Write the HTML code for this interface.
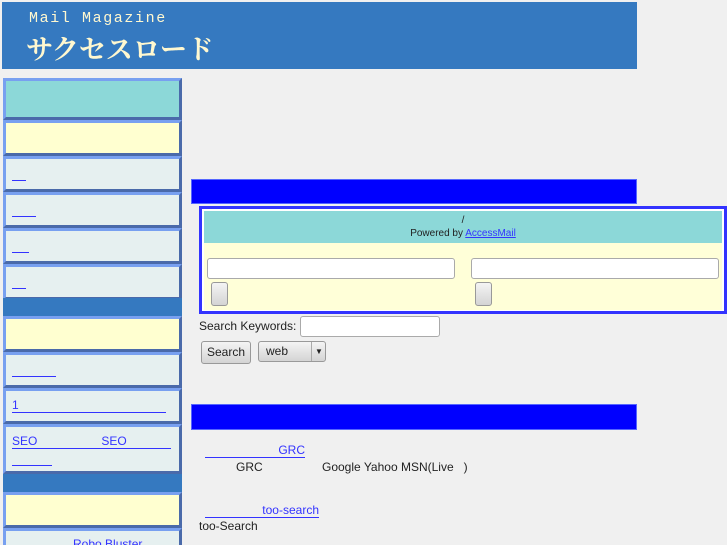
<!DOCTYPE html>
<html style="overflow:hidden;height:545px"><head><meta charset="utf-8"><style>
body{margin:0;background:#f0f0f0;width:727px;height:545px;overflow:hidden;position:relative;font-family:"Liberation Sans","DejaVu Sans",sans-serif;font-size:12px;color:#222}
.a{position:absolute}
.hd{left:2px;top:2px;width:635px;height:67px;background:#3579c0}
.hd .t1{left:27px;top:8px;color:#fff8d0;font-family:"Liberation Mono",monospace;font-size:15px;letter-spacing:1.6px}
.hd .t2{left:24px;top:26px;color:#fff8d0;font-family:"Noto Serif CJK SC","Noto Sans CJK JP",serif;font-size:27px;font-weight:bold;letter-spacing:0}
.bx{position:absolute;left:3px;width:173px;border:3px solid;border-color:#78a0f0 #4a6aaa #4a6aaa #78a0f0;background:#e6f0f0}
.tq{background:#8cd8d8}.cr{background:#ffffd0}
.bar{position:absolute;left:3px;width:179px;background:#3579c0}
.u{display:inline-block;border-bottom:1px solid #3333ff;color:#3333ff;height:13px;line-height:13px;font-size:12px}
.lk{position:absolute;left:6px}
.blue{position:absolute;left:191px;width:446px;background:#0000ff;border:1px solid #5566ff;box-sizing:border-box}
.inp{position:absolute;background:#fff;border:1px solid #aaa;border-radius:3px;box-sizing:border-box}
.btn{position:absolute;background:linear-gradient(#f4f4f4,#d4d4d4);border:1px solid #999;border-radius:3px;box-sizing:border-box;font-size:12px;text-align:center}
</style></head><body>
<div class="a hd"><div class="a t1">Mail Magazine</div><div class="a t2">サクセスロード</div></div>

<div class="bx tq" style="top:78px;height:36px"></div>
<div class="bx cr" style="top:120px;height:30px"></div>
<div class="bx" style="top:156px;height:30px"><span class="u lk" style="top:8px;width:14px"></span></div>
<div class="bx" style="top:192px;height:30px"><span class="u lk" style="top:8px;width:24px"></span></div>
<div class="bx" style="top:228px;height:30px"><span class="u lk" style="top:8px;width:17px"></span></div>
<div class="bx" style="top:264px;height:30px"><span class="u lk" style="top:8px;width:14px"></span></div>
<div class="bar" style="top:298px;height:18px"></div>
<div class="bx cr" style="top:316px;height:30px"></div>
<div class="bx" style="top:352px;height:30px"><span class="u lk" style="top:8px;width:44px"></span></div>
<div class="bx" style="top:388px;height:30px"><span class="u lk" style="top:8px;width:154px">1</span></div>
<div class="bx" style="top:424px;height:44px"><span class="u lk" style="top:8px;width:159px">SEO<span style="margin-left:64px">SEO</span></span><span class="u lk" style="top:25px;width:40px"></span></div>
<div class="bar" style="top:474px;height:18px"></div>
<div class="bx cr" style="top:492px;height:30px"></div>
<div class="bx" style="top:528px;height:30px"><span class="u" style="position:absolute;left:67px;top:7px;border:0">Robo Bluster</span></div>

<div class="blue" style="top:179px;height:25px"></div>
<div class="a" style="left:199px;top:206px;width:528px;height:108px;background:#fff;border:3px solid #3333ff;box-sizing:border-box">
 <div class="a" style="left:2px;top:2px;width:518px;height:32px;background:#8cd8d8;text-align:center;font-size:10px;line-height:13px;padding-top:3px;box-sizing:border-box">/<br>Powered by <span style="color:#3333ff;text-decoration:underline">AccessMail</span></div>
 <div class="a" style="left:2px;top:34px;width:518px;height:67px;background:#ffffd8"></div>
</div>
<div class="inp" style="left:207px;top:258px;width:248px;height:21px"></div>
<div class="inp" style="left:471px;top:258px;width:248px;height:21px"></div>
<div class="btn" style="left:211px;top:282px;width:17px;height:24px"></div>
<div class="btn" style="left:475px;top:282px;width:17px;height:24px"></div>

<div class="a" style="left:199px;top:319px;font-size:12px">Search Keywords:</div>
<div class="inp" style="left:300px;top:316px;width:140px;height:21px"></div>
<div class="btn" style="left:201px;top:341px;width:50px;height:23px;line-height:21px">Search</div>
<div class="btn" style="left:258px;top:341px;width:68px;height:21px;line-height:19px;text-align:left;padding-left:7px">web<span style="position:absolute;left:52px;top:0;height:19px;border-left:1px solid #aaa;width:14px;text-align:center;font-size:8px">▼</span></div>

<div class="blue" style="top:404px;height:26px"></div>
<span class="u a" style="left:205px;top:444px;width:100px;text-align:right">GRC</span>
<div class="a" style="left:236px;top:460px">GRC</div>
<div class="a" style="left:322px;top:460px">Google Yahoo MSN(Live &nbsp;&nbsp;)</div>
<span class="u a" style="left:205px;top:504px;width:114px;text-align:right">too-search</span>
<div class="a" style="left:199px;top:519px">too-Search</div>
</body></html>
